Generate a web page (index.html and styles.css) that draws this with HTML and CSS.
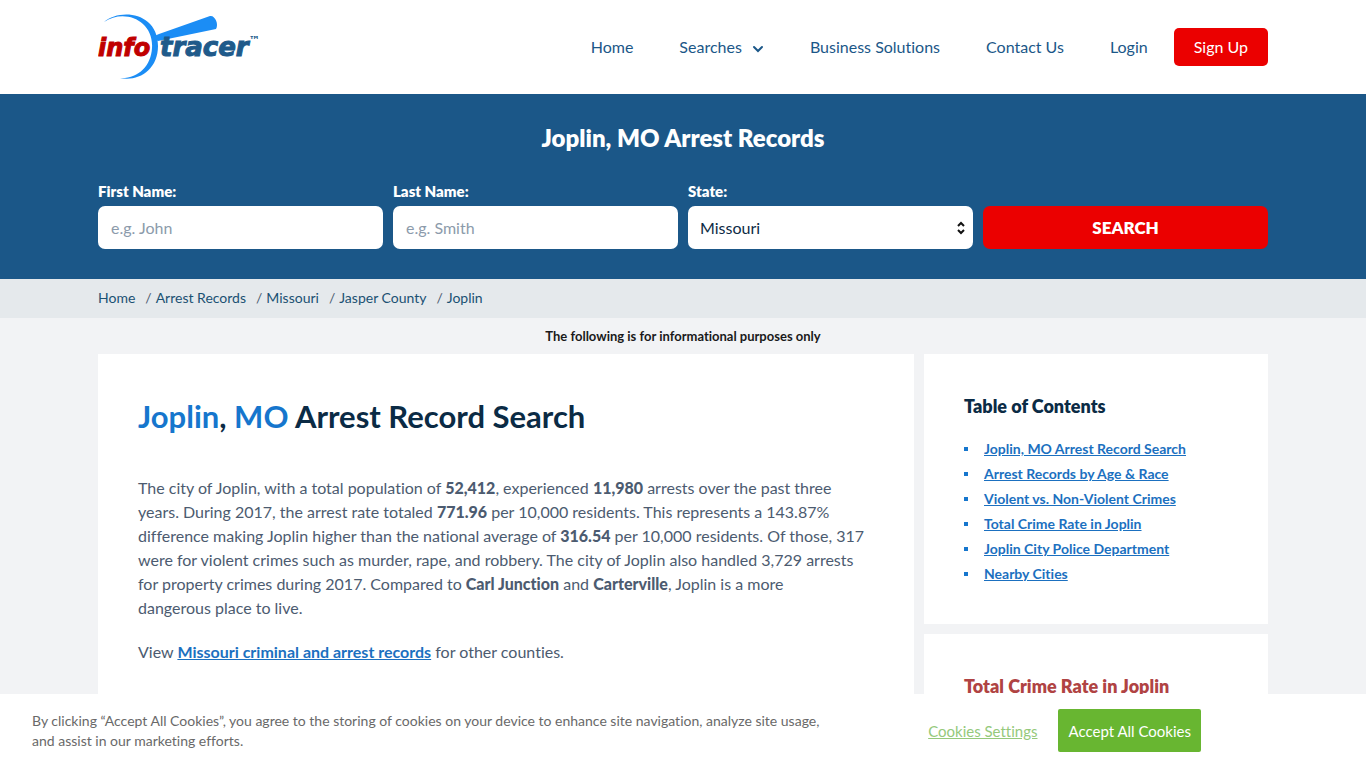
FILE: index.html
```html
<!DOCTYPE html>
<html lang="en">
<head>
  <meta charset="UTF-8">
  <meta name="viewport" content="width=device-width, initial-scale=1">
  <title>Joplin, MO Arrest Records</title>
  <link rel="stylesheet" href="styles.css">
</head>
<body>

<header class="header">
  <div class="container header-inner">
    <a href="#" class="logo" aria-label="InfoTracer">
      <svg width="164" height="66" viewBox="0 0 164 66">
        <path fill="#1b8df5" d="M6 8 C22 -6 60 -2 60 32 C60 56 40 68 22 64 C40 65 53 52 54 34 C56 6 26 -6 6 8z"/>
        <path fill="#1b8df5" d="M55 24 Q57 21 61 20 L112 2 C117 1 121 10 118 15 L60 27z"/>
        <text class="logo-info" x="0" y="42">info</text>
        <text class="logo-tracer" x="62" y="42">tracer</text>
        <text class="logo-tm" x="151" y="30">™</text>
      </svg>
    </a>
    <nav class="nav">
      <a href="#">Home</a>
      <a href="#">Searches
        <svg class="chevron" width="12" height="8" viewBox="0 0 12 8"><path d="M2 2l4 4 4-4" fill="none" stroke="currentColor" stroke-width="2" stroke-linecap="round"/></svg>
      </a>
      <a href="#">Business Solutions</a>
      <a href="#">Contact Us</a>
      <a href="#">Login</a>
      <a href="#" class="signup">Sign Up</a>
    </nav>
  </div>
</header>

<section class="search">
  <div class="container">
    <h2 class="search-title">Joplin, MO Arrest Records</h2>
    <form class="search-form">
      <div class="field">
        <label for="firstName">First Name:</label>
        <input type="text" id="firstName" placeholder="e.g. John">
      </div>
      <div class="field">
        <label for="lastName">Last Name:</label>
        <input type="text" id="lastName" placeholder="e.g. Smith">
      </div>
      <div class="field">
        <label for="state">State:</label>
        <div class="select-wrap">
          <select id="state">
            <option>Missouri</option>
          </select>
          <svg class="select-arrows" width="8" height="14" viewBox="0 0 8 14"><path d="M1 5l3-3 3 3M1 9l3 3 3-3" fill="none" stroke="#111" stroke-width="2"/></svg>
        </div>
      </div>
      <button type="button" class="search-btn">SEARCH</button>
    </form>
  </div>
</section>

<div class="breadcrumbs">
  <ul class="container">
    <li><a href="#">Home</a></li>
    <li><a href="#">Arrest Records</a></li>
    <li><a href="#">Missouri</a></li>
    <li><a href="#">Jasper County</a></li>
    <li><a href="#">Joplin</a></li>
  </ul>
</div>

<p class="notice">The following is for informational purposes only</p>

<div class="container content">
  <main class="card">
    <h1><span>Joplin</span>, <span>MO</span> Arrest Record Search</h1>
    <p>The city of Joplin, with a total population of <b>52,412</b>, experienced <b>11,980</b> arrests over the past three years. During 2017, the arrest rate totaled <b>771.96</b> per 10,000 residents. This represents a 143.87% difference making Joplin higher than the national average of <b>316.54</b> per 10,000 residents. Of those, 317 were for violent crimes such as murder, rape, and robbery. The city of Joplin also handled 3,729 arrests for property crimes during 2017. Compared to <b>Carl Junction</b> and <b>Carterville</b>, Joplin is a more <br>dangerous place to live.</p>
    <p>View <a href="#">Missouri criminal and arrest records</a> for other counties.</p>
  </main>
  <aside class="sidebar">
    <div class="card toc">
      <h3>Table of Contents</h3>
      <ul>
        <li><a href="#">Joplin, MO Arrest Record Search</a></li>
        <li><a href="#">Arrest Records by Age &amp; Race</a></li>
        <li><a href="#">Violent vs. Non-Violent Crimes</a></li>
        <li><a href="#">Total Crime Rate in Joplin</a></li>
        <li><a href="#">Joplin City Police Department</a></li>
        <li><a href="#">Nearby Cities</a></li>
      </ul>
    </div>
    <div class="card">
      <h3 class="red">Total Crime Rate in Joplin</h3>
    </div>
  </aside>
</div>

<!-- cookie banner -->
<div class="cookies">
  <p>By clicking “Accept All Cookies”, you agree to the storing of cookies on your device to enhance site navigation, analyze site usage, and assist in our marketing efforts.</p>
  <div class="cookies-actions">
    <button type="button" class="cookies-settings">Cookies Settings</button>
    <button type="button" class="cookies-accept">Accept All Cookies</button>
  </div>
</div>

</body>
</html>
```
FILE: styles.css
```css
* {
  box-sizing: border-box;
}

body {
  margin: 0;
  background: #f2f3f5;
  color: #4c5b70;
  font-family: Lato, "Liberation Sans", sans-serif;
  font-size: 16px;
  font-variant-ligatures: none;
  line-height: 24px;
}

h1, h2, h3, p, ul {
  margin: 0;
  padding: 0;
}

ul {
  list-style: none;
}

input, select, button {
  font-family: inherit;
  font-variant-ligatures: none;
}

.container {
  max-width: 1170px;
  margin: 0 auto;
}

/* header */
.header {
  background: #fff;
}
.header-inner {
  display: flex;
  align-items: center;
  justify-content: space-between;
  height: 94px;
}
.logo svg {
  display: block;
}
.logo text {
  font-family: "DejaVu Sans", sans-serif;
  font-weight: 700;
  font-style: italic;
}
.logo .logo-info {
  font-size: 24px;
  fill: #c00000;
  stroke: #c00000;
}
.logo .logo-tracer {
  font-size: 26px;
  fill: #205a8a;
  stroke: #205a8a;
}
.logo .logo-tm {
  font-size: 11px;
  fill: #205a8a;
}

.nav {
  display: flex;
  align-items: center;
  gap: 46px;
}
.nav a {
  color: #1b5788;
  text-decoration: none;
}
.chevron {
  margin-left: 6px;
}
.nav .signup {
  margin-left: -20px;
  padding: 7px 20px;
  border-radius: 5px;
  background: #eb0000;
  color: #fff;
}

/* search */
.search {
  padding: 28px 0 30px;
  background: #1b5788;
  color: #fff;
}
.search-title {
  margin-bottom: 25px;
  font-size: 24px;
  font-weight: 800;
  line-height: 32px;
  text-align: center;
}
.search-form {
  display: grid;
  grid-template-columns: repeat(4, 1fr);
  gap: 10px;
  align-items: end;
}
.field label {
  display: block;
  margin-bottom: 3px;
  font-size: 15px;
  font-weight: 800;
}
.field input,
.field select {
  display: block;
  width: 100%;
  height: 43px;
  padding: 0 13px;
  border: 0;
  border-radius: 7px;
  background: #fff;
  color: #0d2b45;
  font-size: 16px;
}
.field input::placeholder {
  color: #8c9bab;
}
.field select {
  padding: 0 12px;
  appearance: none;
}
.select-wrap {
  position: relative;
}
.select-arrows {
  position: absolute;
  top: 15px;
  right: 8px;
  pointer-events: none;
}
.search-btn {
  height: 43px;
  border: 0;
  border-radius: 7px;
  background: #eb0000;
  color: #fff;
  font-size: 17px;
  font-weight: 800;
}

/* breadcrumbs */
.breadcrumbs {
  padding: 7px 0 8px;
  background: #e5e9ec;
  font-size: 14px;
}
.breadcrumbs ul {
  display: flex;
}
.breadcrumbs li + li::before {
  content: '/';
  margin: 0 4px 0 10px;
}
.breadcrumbs a {
  color: #1b5173;
  text-decoration: none;
}

.notice {
  padding: 6px 0;
  color: #1a1a1a;
  font-size: 13px;
  font-weight: 700;
  text-align: center;
}

/* content */
.content {
  display: grid;
  grid-template-columns: 1fr 344px;
  gap: 10px;
}
.card {
  padding: 40px 40px 38px;
  background: #fff;
}
.card h1 {
  margin-bottom: 38px;
  color: #0b2b45;
  font-size: 31px;
  font-weight: 700;
  line-height: 44px;
}
.card h1 span {
  color: #1676cd;
}
.card p {
  margin-bottom: 20px;
}
.card b {
  font-weight: 900;
}
.card a {
  color: #1b70c0;
  font-weight: 700;
}
.card h3 {
  color: #0b2b45;
  font-size: 18px;
  font-weight: 800;
}
.card h3.red {
  color: #b04343;
}
.sidebar {
  display: flex;
  flex-direction: column;
  gap: 10px;
}
.toc h3 {
  margin-bottom: 18px;
}
.toc li {
  display: flex;
  align-items: center;
  gap: 16px;
  font-size: 14px;
  line-height: 25px;
}
.toc li::before {
  content: '';
  width: 4px;
  height: 4px;
  background: #1676cd;
}

/* cookie banner */
.cookies {
  position: fixed;
  left: 0;
  right: 0;
  bottom: 0;
  display: flex;
  align-items: center;
  justify-content: space-between;
  padding: 15px 165px 16px 32px;
  background: #fff;
  color: #696969;
  font-size: 14px;
  line-height: 20px;
}
.cookies p {
  max-width: 800px;
}
.cookies-actions {
  display: flex;
  align-items: center;
  gap: 21px;
}
.cookies button {
  font-size: 15px;
}
.cookies-settings {
  padding: 0;
  border: 0;
  background: none;
  color: #95c97b;
  text-decoration: underline;
}
.cookies-accept {
  height: 43px;
  padding: 0 10px;
  border: 0;
  border-radius: 2px;
  background: #68b631;
  color: #fff;
}
```
